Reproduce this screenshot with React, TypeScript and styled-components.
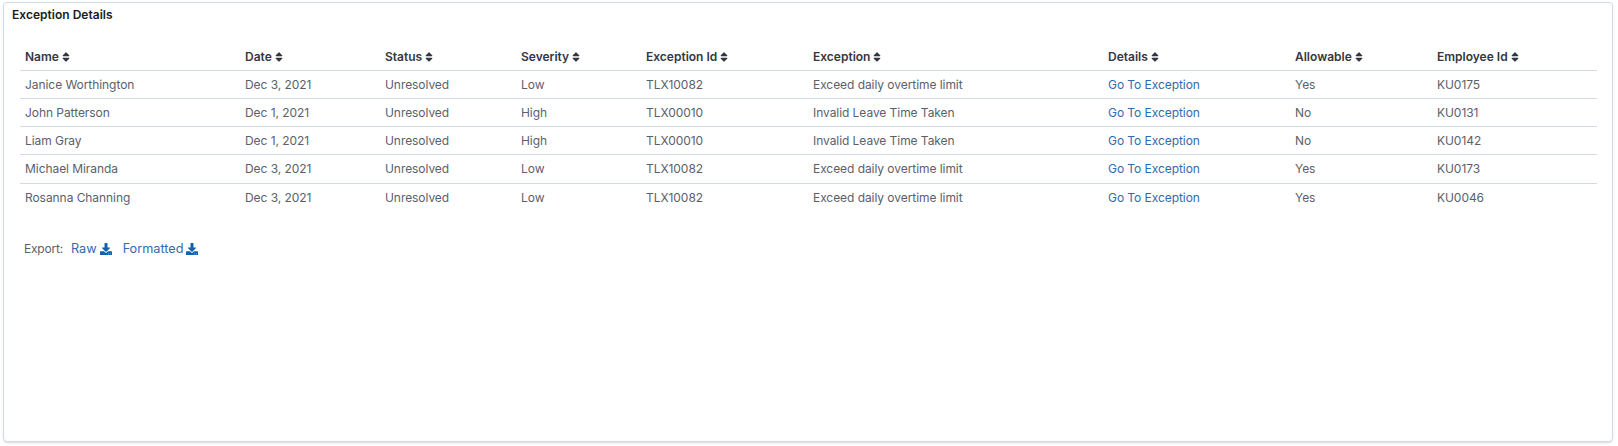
import React from "react";
import styled, { createGlobalStyle } from "styled-components";
import { FaSort, FaDownload } from "react-icons/fa";

const Global = createGlobalStyle`
  html, body { margin: 0; padding: 0; background: #fff; }
  body { font-family: Inter, "Liberation Sans", sans-serif; }
`;

const Page = styled.div`
  width: 1618px;
  height: 446px;
  padding: 2px 5px 4px 3px;
  box-sizing: border-box;
`;

const Card = styled.section`
  height: 100%;
  box-sizing: border-box;
  background: #fff;
  border: 1px solid #d3dae6;
  border-radius: 4px;
  box-shadow: 0 2px 2px -1px rgba(152, 162, 179, 0.3), 0 1px 5px -2px rgba(152, 162, 179, 0.3);
  padding: 4px 16px 0 16px;
`;

const Title = styled.h2`
  margin: 0 0 0 -8px;
  font-size: 12px;
  line-height: 16px;
  font-weight: 600;
  letter-spacing: 0.02px;
  color: #1a1c21;
`;

const Table = styled.table`
  width: 1577px;
  margin-top: 22px;
  table-layout: fixed;
  border-collapse: collapse;
  font-size: 12px;
  letter-spacing: -0.06px;
`;

const Head = styled.th<{ $w: number }>`
  box-sizing: border-box;
  width: ${(p) => p.$w}px;
  height: 25px;
  padding: 0 5px 2px;
  text-align: left;
  font-weight: 600;
  letter-spacing: 0;
  color: #343741;
  border-bottom: 1px solid #d3dae6;
  white-space: nowrap;
`;

const SortIcon = styled(FaSort)`
  height: 12px;
  width: auto;
  margin-left: 1px;
  vertical-align: -2px;
  color: #343741;
`;

const Row = styled.tr`
  height: 28.25px;
  border-bottom: 1px solid #d3dae6;
  &:last-child { border-bottom: none; }
`;

const Cell = styled.td`
  padding: 0 5px;
  color: #5a5f6b;
  white-space: nowrap;
`;

const Link = styled.a`
  color: #2f6bb0;
  text-decoration: none;
`;

const ExportBar = styled.div`
  display: flex;
  align-items: center;
  margin: 30px 0 0 4px;
  line-height: 16px;
  color: #5a5f6b;
`;

const ExportLabel = styled.span`
  width: 47px;
  font-size: 12px;
  letter-spacing: -0.2px;
`;

const ExportLink = styled.a`
  display: inline-flex;
  align-items: center;
  gap: 3px;
  margin-right: 11px;
  font-size: 12.7px;
  color: #2f6bb0;
`;

const DownloadIcon = styled(FaDownload)`
  width: 12px;
  height: 12px;
  color: #0f62ae;
`;

const columns: [string, number][] = [
  ["Name", 220],
  ["Date", 140],
  ["Status", 136],
  ["Severity", 125],
  ["Exception Id", 167],
  ["Exception", 295],
  ["Details", 187],
  ["Allowable", 142],
  ["Employee Id", 165],
];

const rows = [
  ["Janice Worthington", "Dec 3, 2021", "Unresolved", "Low", "TLX10082", "Exceed daily overtime limit", "Yes", "KU0175"],
  ["John Patterson", "Dec 1, 2021", "Unresolved", "High", "TLX00010", "Invalid Leave Time Taken", "No", "KU0131"],
  ["Liam Gray", "Dec 1, 2021", "Unresolved", "High", "TLX00010", "Invalid Leave Time Taken", "No", "KU0142"],
  ["Michael Miranda", "Dec 3, 2021", "Unresolved", "Low", "TLX10082", "Exceed daily overtime limit", "Yes", "KU0173"],
  ["Rosanna Channing", "Dec 3, 2021", "Unresolved", "Low", "TLX10082", "Exceed daily overtime limit", "Yes", "KU0046"],
];

export default function App() {
  return (
    <Page>
      <Global />
      <Card>
        <Title>Exception Details</Title>
        <Table>
          <thead>
            <tr>
              {columns.map(([name, w]) => (
                <Head key={name} $w={w}>
                  {name}
                  <SortIcon />
                </Head>
              ))}
            </tr>
          </thead>
          <tbody>
            {rows.map((r) => (
              <Row key={r[0]}>
                {r.slice(0, 6).map((v, i) => (
                  <Cell key={i}>{v}</Cell>
                ))}
                <Cell>
                  <Link>Go To Exception</Link>
                </Cell>
                <Cell>{r[6]}</Cell>
                <Cell>{r[7]}</Cell>
              </Row>
            ))}
          </tbody>
        </Table>
        <ExportBar>
          <ExportLabel>Export:</ExportLabel>
          <ExportLink>
            Raw
            <DownloadIcon />
          </ExportLink>
          <ExportLink>
            Formatted
            <DownloadIcon />
          </ExportLink>
        </ExportBar>
      </Card>
    </Page>
  );
}
